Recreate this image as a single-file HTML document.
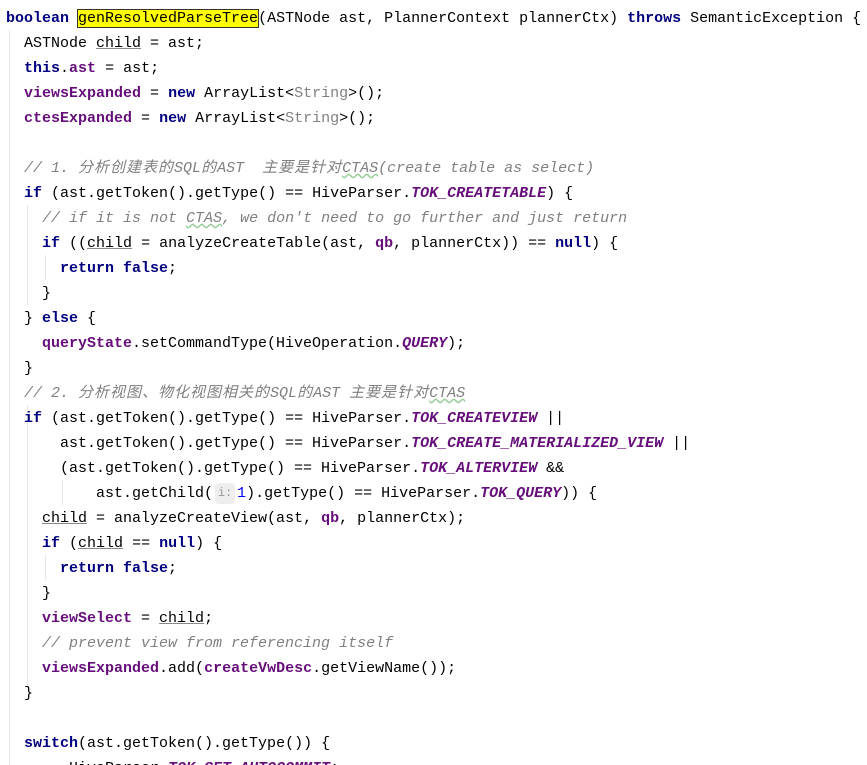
<!DOCTYPE html>
<html><head><meta charset="utf-8"><style>
html,body{margin:0;padding:0;background:#fff;width:867px;height:765px;overflow:hidden;position:relative}
pre{margin:0;position:absolute;left:6px;top:6px;font-family:"Liberation Mono","Noto Sans CJK SC",monospace;font-size:15px;line-height:25px;color:#000}
.k{color:#000080;font-weight:bold}
.f{color:#660e7a;font-weight:bold}
.c{color:#808080;font-style:italic}
.cj{letter-spacing:1px}
.ci{color:#660e7a;font-weight:bold;font-style:italic}
.n{color:#0000ff}
.g{color:#808080}
.u{text-decoration:underline;text-decoration-color:#888}
.w{text-decoration:underline wavy #9c9;}
.hl{background:#ffff00;outline:1px solid #333}
.h{display:inline-block;width:20px;height:21px;background:#eeeeee;border-radius:4px;color:#999;font-size:12px;text-align:center;vertical-align:middle;margin:0 2px;line-height:21px}
.gd{position:absolute;width:1px;background:#e6e6e6}
</style></head><body>
<div class="gd" style="left:9px;top:30px;height:735px"></div>
<div class="gd" style="left:27px;top:205px;height:100px"></div>
<div class="gd" style="left:45px;top:255px;height:25px"></div>
<div class="gd" style="left:27px;top:405px;height:280px"></div>
<div class="gd" style="left:62px;top:480px;height:25px"></div>
<div class="gd" style="left:45px;top:555px;height:25px"></div>
<pre><span class="k">boolean</span> <span class="hl">genResolvedParseTree</span>(ASTNode ast, PlannerContext plannerCtx) <span class="k">throws</span> SemanticException {
  ASTNode <span class="u">child</span> = ast;
  <span class="k">this</span>.<span class="f">ast</span> = ast;
  <span class="f">viewsExpanded</span> = <span class="k">new</span> ArrayList&lt;<span class="g">String</span>&gt;();
  <span class="f">ctesExpanded</span> = <span class="k">new</span> ArrayList&lt;<span class="g">String</span>&gt;();

  <span class="c">// 1. <span class="cj">分析创建表的</span>SQL<span class="cj">的</span>AST  <span class="cj">主要是针对</span><span class="w">CTAS</span>(create table as select)</span>
  <span class="k">if</span> (ast.getToken().getType() == HiveParser.<span class="ci">TOK_CREATETABLE</span>) {
    <span class="c">// if it is not <span class="w">CTAS</span>, we don't need to go further and just return</span>
    <span class="k">if</span> ((<span class="u">child</span> = analyzeCreateTable(ast, <span class="f">qb</span>, plannerCtx)) == <span class="k">null</span>) {
      <span class="k">return false</span>;
    }
  } <span class="k">else</span> {
    <span class="f">queryState</span>.setCommandType(HiveOperation.<span class="ci">QUERY</span>);
  }
  <span class="c">// 2. <span class="cj">分析视图、物化视图相关的</span>SQL<span class="cj">的</span>AST <span class="cj">主要是针对</span><span class="w">CTAS</span></span>
  <span class="k">if</span> (ast.getToken().getType() == HiveParser.<span class="ci">TOK_CREATEVIEW</span> ||
      ast.getToken().getType() == HiveParser.<span class="ci">TOK_CREATE_MATERIALIZED_VIEW</span> ||
      (ast.getToken().getType() == HiveParser.<span class="ci">TOK_ALTERVIEW</span> &amp;&amp;
          ast.getChild(<span class="h">i:</span><span class="n">1</span>).getType() == HiveParser.<span class="ci">TOK_QUERY</span>)) {
    <span class="u">child</span> = analyzeCreateView(ast, <span class="f">qb</span>, plannerCtx);
    <span class="k">if</span> (<span class="u">child</span> == <span class="k">null</span>) {
      <span class="k">return false</span>;
    }
    <span class="f">viewSelect</span> = <span class="u">child</span>;
    <span class="c">// prevent view from referencing itself</span>
    <span class="f">viewsExpanded</span>.add(<span class="f">createVwDesc</span>.getViewName());
  }

  <span class="k">switch</span>(ast.getToken().getType()) {
       HiveParser.<span class="ci">TOK_SET_AUTOCOMMIT</span>:
</pre>
</body></html>
